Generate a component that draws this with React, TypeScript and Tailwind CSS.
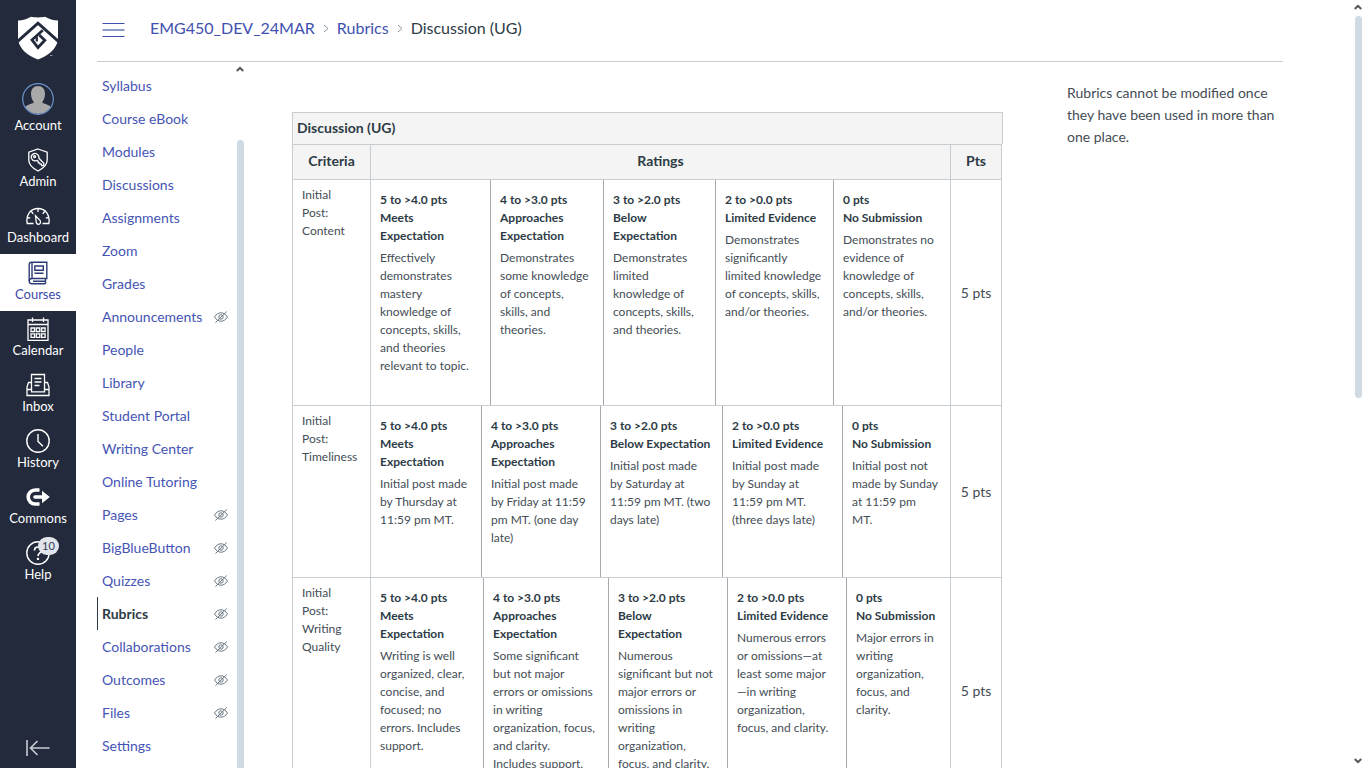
import React from "react";

type IconProps = { className?: string };

const ShieldLogo = () => (
  <svg width="40" height="44" viewBox="0 0 40 44" aria-hidden="true">
    <path
      fill="#fff"
      d="M0 4.500C5 4.500 9 3 13 0.800C16 1.600 24 1.600 27 0.800C31 3 35 4.500 40 4.500V24C38 33.500 30 40 20 43.500C10 40 2 33.500 0 24Z"
    />
    <path fill="none" stroke="#232a3b" strokeWidth="3" d="M-1 26L20 7.200L41 26" />
    <path
      fill="none"
      stroke="#232a3b"
      strokeWidth="2.800"
      d="M24.800 14.200L14 23.800L20 31.500L26.800 24.300L21.500 19.300"
    />
    <path fill="none" stroke="#232a3b" strokeWidth="2.200" d="M18.800 20.800V25.500" />
    <rect x="32" y="39" width="2.500" height="1" fill="#8b909b" />
  </svg>
);

const AvatarIcon = () => (
  <svg width="32" height="32" viewBox="0 0 32 32" aria-hidden="true">
    <defs>
      <clipPath id="avatar-clip">
        <circle cx="16" cy="16" r="15" />
      </clipPath>
    </defs>
    <g clipPath="url(#avatar-clip)" fill="#a9a9a9">
      <path d="M16 3C20.500 3 23 6 23 11C23 14.500 21.500 17.500 20.500 18.500V20C25 21.500 29 22.500 30 26V32H2V26C3 22.500 7 21.500 11.500 20V18.500C10.500 17.500 9 14.500 9 11C9 6 11.500 3 16 3Z" />
    </g>
    <circle cx="16" cy="16" r="15.300" fill="none" stroke="#6a94cf" strokeWidth="1.200" />
  </svg>
);

const AdminIcon = () => (
  <svg width="24" height="24" viewBox="0 0 24 24" fill="none" stroke="currentColor" strokeWidth="1.300" aria-hidden="true">
    <path d="M12 1L21.200 4.200V12C21.200 17 17 20.500 12 23C7 20.500 2.800 17 2.800 12V4.200Z" />
    <path d="M11.800 6.700A3.700 3.700 0 1 0 10.200 12.700L11.200 12.500L12.300 13.600V14.800H13.600L14 16.200H15.300L15.600 17.600H17.800V15.200L12.900 10.200C13.100 9 12.800 7.500 11.800 6.700Z" />
    <circle cx="8.600" cy="8.600" r="1" />
  </svg>
);

const DashboardIcon = () => (
  <svg width="24" height="24" viewBox="0 0 24 24" fill="none" stroke="currentColor" strokeWidth="1.300" aria-hidden="true">
    <path d="M7.500 19.500H1.200C-0.500 11 4.500 4.500 12 4.500S24.500 11 22.800 19.500H16.500" />
    <path d="M12 4.500V8M5.300 7.500L7.300 9.800M18.700 7.500L16.700 9.800M1.300 13.500L4.200 14.200M22.700 13.500L19.800 14.200" />
    <path d="M9.500 11.800L14 16.300C15.200 18 14.300 20.300 12.500 20.300S10.200 19 10.200 17.500Z" />
  </svg>
);

const CoursesIcon = () => (
  <svg width="24" height="24" viewBox="0 0 24 24" fill="none" stroke="currentColor" strokeWidth="1.400" aria-hidden="true">
    <path d="M6 17.500H20.800V1.200H5.500C4 1.200 3.200 2.200 3.200 3.500V20C3.200 21.700 4.200 22.700 5.700 22.700H19.500" />
    <path d="M3.200 20C3.200 18.300 4.200 17.500 6 17.500M6 1.200V17.500M19.500 17.500V22.700M7 20.200H19.500" />
    <path d="M8.800 5H17.300V9.300H8.800ZM8.500 12.200H17.500" />
  </svg>
);

const CalendarIcon = () => (
  <svg width="24" height="24" viewBox="0 0 24 24" fill="none" stroke="currentColor" strokeWidth="1.300" aria-hidden="true">
    <path d="M2 3H22V23.300H2ZM2 7.500H22" />
    <path d="M6.500 0.500V5M17.500 0.500V5" />
    <path d="M5 11H8.500V14.500H5ZM10.300 11H13.800V14.500H10.300ZM15.600 11H19.100V14.500H15.600ZM5 16.800H8.500V20.300H5ZM10.300 16.800H13.800V20.300H10.300ZM15.600 16.800H19.100V20.300H15.600Z" />
  </svg>
);

const InboxIcon = () => (
  <svg width="24" height="24" viewBox="0 0 24 24" fill="none" stroke="currentColor" strokeWidth="1.300" aria-hidden="true">
    <path d="M5.500 16.500V1.500H18.500V16.500" />
    <path d="M8.500 5.500H15.500M8.500 9H15.500M8.500 12.500H13.500" />
    <path d="M5.500 9.500H2.500L1 14V22.500H23V14L21.500 9.500H18.500M1 16.500H5.500V18.800H18.500V16.500H23" />
  </svg>
);

const HistoryIcon = () => (
  <svg width="24" height="24" viewBox="0 0 24 24" fill="none" stroke="currentColor" strokeWidth="1.400" aria-hidden="true">
    <circle cx="12" cy="12" r="11.200" />
    <path d="M12 5V12.500L17 17.300" />
  </svg>
);

const CommonsIcon = () => (
  <svg width="24" height="24" viewBox="0 0 24 24" aria-hidden="true">
    <path fill="none" stroke="currentColor" strokeWidth="3.600" d="M13.500 5H9.200A7 7 0 0 0 9.200 19H13.500" />
    <path fill="currentColor" d="M9 10.200H16V5.800L23.800 12L16 18.200V13.800H9A1.800 1.800 0 0 1 9 10.200Z" />
  </svg>
);

const HelpIcon = () => (
  <svg width="24" height="24" viewBox="0 0 24 24" fill="none" stroke="currentColor" strokeWidth="1.400" aria-hidden="true">
    <circle cx="12" cy="12" r="11.200" />
    <path d="M8.500 9.500C8.500 7 10 6 12 6S15.500 7.200 15.500 9.200C15.500 12 12 11.800 12 15" strokeWidth="1.700" />
    <path d="M12 16.800V19" strokeWidth="2.200" />
  </svg>
);

const CollapseIcon = () => (
  <svg width="24" height="18" viewBox="0 0 24 18" fill="none" stroke="#c9ccd3" strokeWidth="1.600" aria-hidden="true">
    <path d="M1 1V17M4.500 9H23.500M11.500 2L4.500 9L11.500 16" />
  </svg>
);

const HiddenIcon = () => (
  <svg width="14" height="12" viewBox="0 0 14 12" fill="none" stroke="#6a7883" strokeWidth="1" role="img" aria-label="Hidden from students">
    <path d="M0.500 6C2.500 3 4.500 1.800 7 1.800S11.500 3 13.500 6C11.500 9 9.500 10.200 7 10.200S2.500 9 0.500 6Z" />
    <circle cx="7" cy="6" r="2.200" />
    <path d="M1.500 11.500L12.800 0.500" />
  </svg>
);

const Chevron = ({ className }: IconProps) => (
  <svg width="8" height="6" viewBox="0 0 8 6" fill="none" stroke="#555" strokeWidth="2" className={className} aria-hidden="true">
    <path d="M0.800 5L4 1.800L7.200 5" />
  </svg>
);

const globalItems = [
  { label: "Admin", icon: <AdminIcon /> },
  { label: "Dashboard", icon: <DashboardIcon /> },
  { label: "Courses", icon: <CoursesIcon />, active: true },
  { label: "Calendar", icon: <CalendarIcon /> },
  { label: "Inbox", icon: <InboxIcon /> },
  { label: "History", icon: <HistoryIcon /> },
  { label: "Commons", icon: <CommonsIcon /> },
  { label: "Help", icon: <HelpIcon />, badge: 10 },
];

const courseItems: { label: string; hidden?: boolean; active?: boolean }[] = [
  { label: "Syllabus" },
  { label: "Course eBook" },
  { label: "Modules" },
  { label: "Discussions" },
  { label: "Assignments" },
  { label: "Zoom" },
  { label: "Grades" },
  { label: "Announcements", hidden: true },
  { label: "People" },
  { label: "Library" },
  { label: "Student Portal" },
  { label: "Writing Center" },
  { label: "Online Tutoring" },
  { label: "Pages", hidden: true },
  { label: "BigBlueButton", hidden: true },
  { label: "Quizzes", hidden: true },
  { label: "Rubrics", hidden: true, active: true },
  { label: "Collaborations", hidden: true },
  { label: "Outcomes", hidden: true },
  { label: "Files", hidden: true },
  { label: "Settings" },
];

const levels = [
  { pts: "5 to >4.0 pts", name: "Meets Expectation" },
  { pts: "4 to >3.0 pts", name: "Approaches Expectation" },
  { pts: "3 to >2.0 pts", name: "Below Expectation" },
  { pts: "2 to >0.0 pts", name: "Limited Evidence" },
  { pts: "0 pts", name: "No Submission" },
];

const criteria = [
  {
    name: "Initial Post: Content",
    columns: "grid-cols-[119fr_113fr_112fr_118fr_117fr]",
    ratings: [
      "Effectively demonstrates mastery knowledge of concepts, skills, and theories relevant to topic.",
      "Demonstrates some knowledge of concepts, skills, and theories.",
      "Demonstrates limited knowledge of concepts, skills, and theories.",
      "Demonstrates significantly limited knowledge of concepts, skills, and/or theories.",
      "Demonstrates no evidence of knowledge of concepts, skills, and/or theories.",
    ],
  },
  {
    name: "Initial Post: Timeliness",
    columns: "grid-cols-[110fr_119fr_122fr_120fr_108fr]",
    ratings: [
      "Initial post made by Thursday at 11:59 pm MT.",
      "Initial post made by Friday at 11:59 pm MT. (one day late)",
      "Initial post made by Saturday at 11:59 pm MT. (two days late)",
      "Initial post made by Sunday at 11:59 pm MT. (three days late)",
      "Initial post not made by Sunday at 11:59 pm MT.",
    ],
  },
  {
    name: "Initial Post: Writing Quality",
    columns: "grid-cols-[112fr_125fr_119fr_119fr_104fr]",
    ratings: [
      "Writing is well organized, clear, concise, and focused; no errors. Includes support.",
      "Some significant but not major errors or omissions in writing organization, focus, and clarity. Includes\u00a0support.",
      "Numerous significant but not major errors or omissions in writing organization, focus, and clarity.",
      "Numerous errors or omissions—at least some major\u200b—\u2060in writing organization, focus, and clarity.",
      "Major errors in writing organization, focus, and clarity.",
    ],
  },
];

function GlobalNav() {
  return (
    <nav aria-label="Global" className="flex w-[76px] shrink-0 flex-col bg-[#232a3b] text-white">
      <a href="#home" aria-label="Home" className="flex h-[76px] shrink-0 items-center justify-center">
        <ShieldLogo />
      </a>
      <a href="#account" className="flex h-[66px] shrink-0 flex-col items-center pt-[7px] text-[13px] leading-[18px]">
        <AvatarIcon />
        <span className="mt-px">Account</span>
      </a>
      <ul className="flex flex-col">
        {globalItems.map((item) => (
          <li key={item.label}>
            <a
              href={"#" + item.label.toLowerCase()}
              className={
                item.active
                  ? "flex h-[57px] flex-col items-center bg-white pt-[7px] text-[13px] leading-[18px] text-[#3b4ba8]"
                  : "flex h-14 flex-col items-center pt-[6px] text-[13px] leading-[18px]"
              }
            >
              <span className={item.active ? "relative text-[#2d3b75]" : "relative"}>
                {item.icon}
                {item.badge && (
                  <span className="absolute -top-1 left-3 flex h-[18px] w-[21px] items-center justify-center rounded-full bg-[#e2e5eb] text-[11px] text-[#2d3b55]">
                    {item.badge}
                  </span>
                )}
              </span>
              <span>{item.label}</span>
            </a>
          </li>
        ))}
      </ul>
      <button type="button" aria-label="Minimize global navigation" className="mt-auto flex h-10 items-center justify-center">
        <CollapseIcon />
      </button>
    </nav>
  );
}

function CourseMenu() {
  return (
    <div className="flex w-[147px] shrink-0">
      <nav aria-label="Course" className="min-w-0 flex-1 overflow-hidden">
        <ul className="pt-[7px]">
          {courseItems.map((item) => (
            <li key={item.label}>
              <a
                href={"#course-" + item.label.toLowerCase().replace(" ", "-")}
                className={
                  item.active
                    ? "flex h-[33px] items-center justify-between border-l border-[#2d3b45] pr-2 pl-1 text-sm font-bold text-[#2d3b45]"
                    : "flex h-[33px] items-center justify-between pr-2 pl-[5px] text-sm text-[#4555b5]"
                }
              >
                {item.label}
                {item.hidden && <HiddenIcon />}
              </a>
            </li>
          ))}
        </ul>
      </nav>
      <div aria-hidden="true" className="flex w-2 flex-col items-center pt-1">
        <Chevron />
        <div className="mt-[68px] w-[7px] flex-1 rounded-t bg-[#d0dae2]" />
      </div>
    </div>
  );
}

function RubricTable() {
  return (
    <table className="w-full border-collapse text-[#2d3b45]">
      <caption className="-mr-px border border-b-0 border-[#c7cdd1] bg-[#f4f4f4] px-1 pb-[2px] text-left text-sm leading-[29px] font-bold">
        Discussion (UG)
      </caption>
      <thead>
        <tr className="h-[35px] bg-[#f4f4f4] text-sm">
          <th scope="col" className="w-[78px] border border-[#c7cdd1] pb-[2px]">Criteria</th>
          <th scope="col" className="border border-[#c7cdd1] pb-[2px]">Ratings</th>
          <th scope="col" className="w-[51px] border border-[#c7cdd1] pb-[2px]">Pts</th>
        </tr>
      </thead>
      <tbody>
        {criteria.map((criterion) => (
          <tr key={criterion.name}>
            <th scope="row" className="border border-[#c7cdd1] py-[6px] pr-3 pl-[9px] text-left align-top text-xs leading-[18px] font-normal text-[#444d55]">
              {criterion.name}
            </th>
            <td className="h-px border border-[#c7cdd1] p-0">
              <div className={"grid h-full " + criterion.columns}>
                {criterion.ratings.map((text, i) => (
                  <div
                    key={levels[i].pts}
                    className="min-w-0 border-l border-[#a5a9ad] pt-[11px] pr-[11px] pb-[30px] pl-[9px] text-xs leading-[18px] first:border-l-0"
                  >
                    <div className="font-bold">{levels[i].pts}</div>
                    <div className="font-bold">{levels[i].name}</div>
                    <p className="mt-1 text-[#444d55]">{text}</p>
                  </div>
                ))}
              </div>
            </td>
            <td className="border border-[#c7cdd1] text-center text-sm whitespace-nowrap text-[#444d55]">5 pts</td>
          </tr>
        ))}
      </tbody>
    </table>
  );
}

export default function App() {
  return (
    <div className="flex h-screen overflow-hidden bg-white font-['Lato',sans-serif] text-[#2d3b45]">
      <GlobalNav />
      <div className="flex min-w-0 flex-1 flex-col pr-[71px] pl-[21px]">
        <header className="flex h-[62px] shrink-0 items-center border-b border-[#c7cdd1] pb-[6px] pl-[5px]">
          <button type="button" aria-label="Hide course navigation menu" className="mt-1 mr-6">
            <svg width="24" height="16" viewBox="0 0 24 16" aria-hidden="true">
              <path d="M0.500 1.500H22.500M0.500 14.500H22.500" stroke="#3f50b0" strokeWidth="1.200" />
              <path d="M0.500 8H22.500" stroke="#8d9acb" strokeWidth="2" />
            </svg>
          </button>
          <nav aria-label="Breadcrumb">
            <ol className="flex items-center gap-[7px] text-base">
              <li><a href="#course" className="text-[#3f50b0]">EMG450_DEV_24MAR</a></li>
              <li aria-hidden="true" className="pt-[2px]">
                <svg width="8" height="9" viewBox="0 0 8 9" fill="none" stroke="#8b959e"><path d="M2 1L6 4.500L2 8" /></svg>
              </li>
              <li><a href="#rubrics" className="text-[#3f50b0]">Rubrics</a></li>
              <li aria-hidden="true" className="pt-[2px]">
                <svg width="8" height="9" viewBox="0 0 8 9" fill="none" stroke="#8b959e"><path d="M2 1L6 4.500L2 8" /></svg>
              </li>
              <li aria-current="page">Discussion (UG)</li>
            </ol>
          </nav>
        </header>
        <div className="flex min-h-0 flex-1">
          <CourseMenu />
          <main className="min-w-0 flex-1 overflow-hidden pt-[50px] pr-px pl-12">
            <RubricTable />
          </main>
          <aside className="ml-16 w-[216px] shrink-0 pt-5 text-sm leading-[22px] text-[#444d55]">
            Rubrics cannot be modified once they have been used in more than one place.
          </aside>
        </div>
      </div>
      <div aria-hidden="true" className="mr-1 flex w-2 flex-col items-center py-1">
        <Chevron />
        <div className="mt-[6px] h-[382px] w-[7px] rounded bg-[#d0dae2]" />
        <Chevron className="mt-auto rotate-180" />
      </div>
    </div>
  );
}
